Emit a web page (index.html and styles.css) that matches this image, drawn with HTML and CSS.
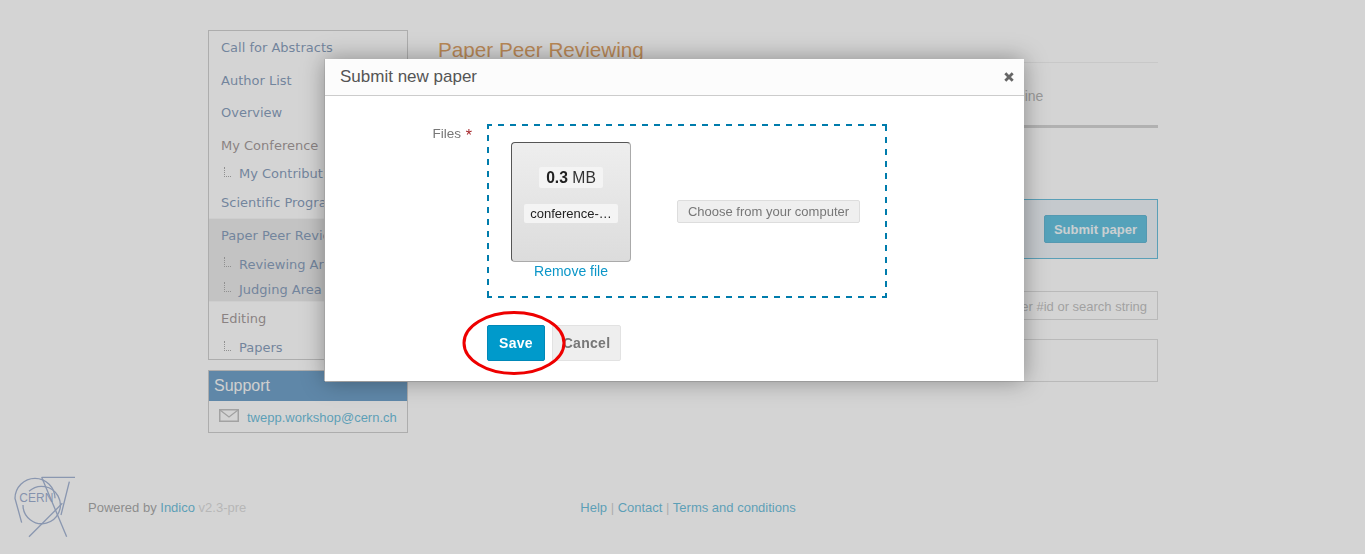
FILE: index.html
```html
<!DOCTYPE html>
<html lang="en">
<head>
  <meta charset="UTF-8">
  <title>Paper Peer Reviewing</title>
  <link rel="stylesheet" href="styles.css">
</head>
<body>

  <div class="page">
    <div class="columns">
      <div class="side">
        <ul class="menu">
          <li class="item">Call for Abstracts</li>
          <li class="item">Author List</li>
          <li class="item">Overview</li>
          <li class="item plain">My Conference</li>
          <li class="item sub">My Contributions</li>
          <li class="item">Scientific Programme</li>
          <li class="group">
            <div class="item">Paper Peer Reviewing</div>
            <div class="item sub">Reviewing Area</div>
            <div class="item sub">Judging Area</div>
          </li>
          <li class="item plain">Editing</li>
          <li class="item sub">Papers</li>
        </ul>
        <div class="support">
          <div class="supportTitle">Support</div>
          <div class="supportMail">
            <svg class="mailIcon" width="20" height="13" viewBox="0 0 20 13">
              <rect x="0.75" y="0.75" width="18.5" height="11.5" fill="none" stroke="#9a9a9a" stroke-width="1.5"/>
              <path d="M1 1l9 7 9-7" fill="none" stroke="#9a9a9a" stroke-width="1.3"/>
            </svg>
            <a class="mailLink">twepp.workshop@cern.ch</a>
          </div>
        </div>
      </div>

      <div class="main">
        <h1 class="title">Paper Peer Reviewing</h1>
        <div class="tabs">Timeline</div>
        <div class="notice">
          <span class="noticeText">You can submit a paper</span>
          <button class="submitPaper">Submit paper</button>
        </div>
        <div class="filter">
          <span class="filterText">Enter #id or search string</span>
        </div>
        <div class="results"></div>
      </div>
    </div>

    <div class="footer">
      <svg class="cern" width="80" height="75" viewBox="0 0 240 225">
        <g fill="none" stroke="#6a84b6" stroke-width="4">
          <path d="M50 158L30 85A60 60 0 0 1 150 85"/>
          <path d="M72 64A56 56 0 1 1 54 105"/>
          <path d="M110 22h100"/>
          <path d="M110 22l75 178"/>
          <path d="M193 35l-25 100"/>
          <path d="M72 200l100-100"/>
        </g>
        <text class="cernText" x="43" y="96">CERN</text>
      </svg>
      <div class="powered">Powered by <a class="link">Indico</a> <span class="version">v2.3-pre</span></div>
      <div class="footerLinks">
        <a class="link">Help</a> | <a class="link">Contact</a> | <a class="link">Terms and conditions</a>
      </div>
    </div>
  </div>

  <div class="overlay"></div>

  <div class="dialog">
    <div class="dialogHead">
      <span class="dialogTitle">Submit new paper</span>
      <svg class="closeIcon" width="10" height="10" viewBox="0 0 10 10">
        <path d="M1.3 1.3l7.4 7.4M8.7 1.3l-7.4 7.4" stroke="#666" stroke-width="2.8" fill="none"/>
      </svg>
    </div>
    <div class="dialogBody">
      <div class="formRow">
        <label class="fieldLabel">Files <span class="required">*</span></label>
        <div class="dropzone">
          <div class="preview">
            <div class="thumb">
              <span class="size"><b>0.3</b> MB</span>
              <span class="fileName">conference-…</span>
            </div>
            <a class="remove">Remove file</a>
          </div>
          <button class="choose">Choose from your computer</button>
        </div>
      </div>
      <div class="actions">
        <button class="save">Save</button>
        <button class="cancel">Cancel</button>
      </div>
    </div>
  </div>

  <svg class="ring" width="110" height="70" viewBox="0 0 110 70">
    <ellipse cx="55" cy="35" rx="50" ry="30.5" fill="none" stroke="#ee0000" stroke-width="3"/>
  </svg>

</body>
</html>
```

FILE: styles.css
```css
html, body {
  margin: 0;
  padding: 0;
  height: 100%;
  background: #fff;
  font-family: 'Liberation Sans', Arial, sans-serif;
  overflow: hidden;
}

.page {
  height: 554px;
}

.columns {
  display: flex;
  gap: 30px;
  padding: 30px 207px 0 208px;
  height: 414px;
  box-sizing: content-box;
}

/* sidebar */
.side {
  width: 200px;
  flex: none;
}

.menu {
  list-style: none;
  margin: 0;
  padding: 0;
  border: 1px solid #b0b0b0;
  height: 328px;
  overflow: hidden;
}

.item {
  height: 32.5px;
  line-height: 33.5px;
  padding-left: 12px;
  font-family: 'DejaVu Sans', Verdana, sans-serif;
  font-size: 13px;
  color: #3a6090;
  white-space: nowrap;
}

.item.plain {
  color: #6a5a5a;
}

.item.sub {
  position: relative;
  height: 25px;
  line-height: 26px;
  padding-left: 30px;
}

.group .item.sub {
  line-height: 28px;
}

.item.sub::before {
  content: "";
  position: absolute;
  left: 15px;
  top: 6px;
  width: 6px;
  height: 9px;
  border-left: 1px dotted #777;
  border-bottom: 1px dotted #777;
}

.group {
  background: #dcdcdc;
  border-top: 1px solid #f2f2f2;
  border-bottom: 1px solid #f2f2f2;
  margin-top: -1px;
}

.support {
  margin-top: 10px;
  border: 1px solid #b0b0b0;
}

.supportTitle {
  background: #1464a6;
  color: #f4f4f4;
  height: 30px;
  line-height: 30px;
  padding-left: 5px;
  font-size: 16px;
}

.supportMail {
  display: flex;
  align-items: center;
  gap: 8px;
  height: 31px;
  padding-left: 10px;
}

.mailIcon {
  margin-top: -3px;
}

.mailLink {
  margin-top: 2px;
  font-size: 13px;
  color: #0a94c4;
}

/* main column */
.main {
  width: 720px;
}

.title {
  margin: 0;
  padding-top: 8px;
  height: 24px;
  line-height: 24px;
  font-size: 20.7px;
  font-weight: normal;
  color: #c86600;
  border-bottom: 1px solid #e6e6e6;
}

.tabs {
  height: 62px;
  padding-left: 553px;
  line-height: 66px;
  font-size: 14px;
  color: #888;
  border-bottom: 3px solid #b8b8b8;
}

.notice {
  display: flex;
  align-items: center;
  justify-content: space-between;
  margin-top: 71px;
  height: 58px;
  padding: 0 10px 0 20px;
  border: 1px solid #0a94c4;
  background: #e0e8f0;
  font-size: 14px;
  color: #666;
}

.submitPaper {
  width: 103px;
  height: 28px;
  padding: 0;
  border: 1px solid #0088b8;
  border-radius: 2px;
  background: #009acb;
  color: #e8f4f8;
  font: bold 13px 'Liberation Sans', Arial, sans-serif;
}

.filter {
  margin-top: 32px;
  height: 27px;
  line-height: 29px;
  padding-right: 10px;
  border: 1px solid #c8c8c8;
  text-align: right;
  font-size: 13px;
  color: #999;
}

.results {
  margin-top: 19px;
  height: 41px;
  border: 1px solid #c8c8c8;
}

/* footer */
.footer {
  display: flex;
  align-items: center;
  height: 75px;
  margin-top: 26px;
  padding-left: 5px;
  font-size: 13px;
  color: #707070;
}

.cern {
  flex: none;
}

.cernText {
  font-family: 'Liberation Sans', sans-serif;
  font-size: 36px;
  fill: #5f7ab0;
}

.powered {
  margin-left: 3px;
}

.link {
  color: #0a94c4;
}

.version {
  color: #c4c4c4;
}

.footerLinks {
  margin-left: 334px;
  color: #b0b0b0;
}

/* modal */
.overlay {
  position: fixed;
  top: 0;
  left: 0;
  width: 100vw;
  height: 100vh;
  background: rgba(170, 170, 170, 0.5);
}

.dialog {
  position: absolute;
  top: 59px;
  left: 325px;
  width: 699px;
  height: 322px;
  background: #fff;
  box-shadow: 0 0 22px rgba(0, 0, 0, 0.35), 0 1px 0 #bbb, -1px 0 0 #c4c4c4;
}

.dialogHead {
  display: flex;
  align-items: center;
  justify-content: space-between;
  height: 36px;
  padding: 0 10px 0 15px;
  background: #fcfcfc;
  border-bottom: 1px solid #ccc;
}

.dialogTitle {
  font-size: 17px;
  color: #555;
}

.closeIcon {
  margin-top: -1px;
}

.dialogBody {
  padding-top: 28px;
}

.formRow {
  display: flex;
}

.fieldLabel {
  box-sizing: border-box;
  width: 148px;
  padding: 2px 1px 0 0;
  text-align: right;
  font-size: 13.5px;
  color: #777;
}

.required {
  margin-left: 1px;
  color: #a5262a;
  font-size: 16px;
  line-height: 13px;
  vertical-align: -3px;
}

/* 6px dash, 6px gap, so drawn by hand instead of border: dashed */
.dropzone {
  display: flex;
  align-items: flex-start;
  box-sizing: border-box;
  width: 400px;
  height: 174px;
  margin-left: 14px;
  padding: 18px 0 0 24px;
  background:
    linear-gradient(90deg, #007cac 6px, transparent 6px) -1px 0 / 12px 2px repeat-x,
    linear-gradient(90deg, #007cac 6px, transparent 6px) -1px 100% / 12px 2px repeat-x,
    linear-gradient(#007cac 6px, transparent 6px) 0 -1px / 2px 12px repeat-y,
    linear-gradient(#007cac 6px, transparent 6px) 100% 1px / 2px 12px repeat-y;
}

.preview {
  display: flex;
  flex-direction: column;
  align-items: center;
  width: 120px;
}

.thumb {
  display: flex;
  flex-direction: column;
  align-items: center;
  box-sizing: border-box;
  width: 120px;
  height: 120px;
  padding-top: 24px;
  border: 1px solid #aaa;
  border-top-color: #555;
  border-left-color: #555;
  border-radius: 4px;
  background: linear-gradient(#eeeeee, #dcdcdc);
}

.size {
  padding: 0 7px;
  height: 21px;
  line-height: 21px;
  border-radius: 2px;
  background: #f4f4f4;
  font-size: 15.7px;
  color: #333;
}

.size b {
  color: #222;
}

.fileName {
  margin-top: 16px;
  width: 94px;
  height: 19px;
  line-height: 19px;
  text-align: center;
  border-radius: 2px;
  background: #f4f4f4;
  font-size: 13px;
  color: #222;
}

.remove {
  margin-top: 1px;
  font-size: 14px;
  line-height: 16px;
  color: #0b96c8;
}

.choose {
  width: 183px;
  height: 23px;
  margin: 58px 0 0 46px;
  padding: 0;
  border: 1px solid #ddd;
  border-radius: 2px;
  background: #efefef;
  font: 13px 'Liberation Sans', Arial, sans-serif;
  color: #777;
}

.actions {
  display: flex;
  gap: 7px;
  margin: 27px 0 0 162px;
}

.save, .cancel {
  height: 36px;
  padding: 0;
  font: bold 14px 'Liberation Sans', Arial, sans-serif;
  letter-spacing: 0.3px;
  border-radius: 2px;
}

.save {
  width: 58px;
  border: 1px solid #0088b8;
  background: #009acb;
  color: #fff;
}

.cancel {
  width: 69px;
  border: 1px solid #e2e2e2;
  background: #eee;
  color: #777;
}

.ring {
  position: absolute;
  top: 308px;
  left: 459px;
}
```
